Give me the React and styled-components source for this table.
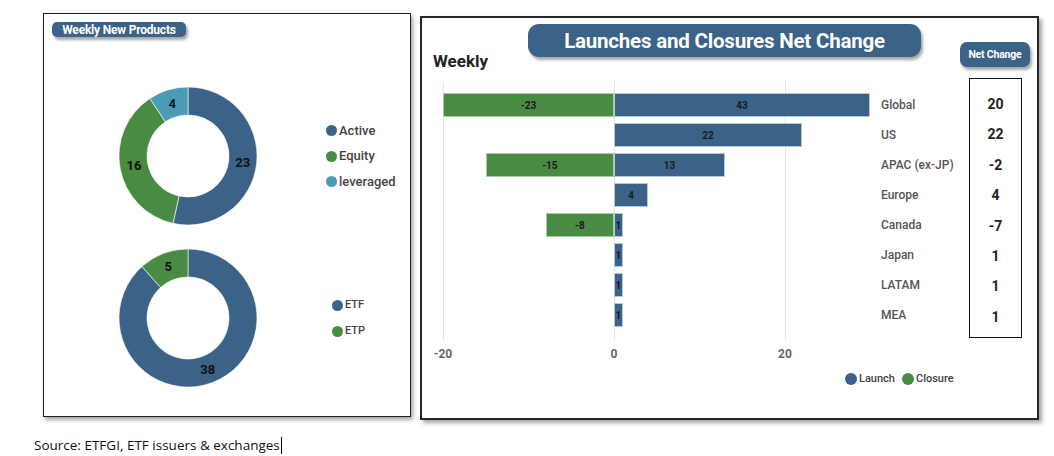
import React from "react";
import styled, { createGlobalStyle } from "styled-components";

const BLUE = "#3b6287";
const GREEN = "#4a8b43";
const TEAL = "#4a9bb6";
const PX = 171 / 20;

const mix = [
  { name: "Active", value: 23, color: BLUE },
  { name: "Equity", value: 16, color: GREEN },
  { name: "leveraged", value: 4, color: TEAL },
];

const wrapper = [
  { name: "ETF", value: 38, color: BLUE },
  { name: "ETP", value: 5, color: GREEN },
];

const regions = [
  { name: "Global", launch: 43, closure: -23, net: 20 },
  { name: "US", launch: 22, closure: 0, net: 22 },
  { name: "APAC (ex-JP)", launch: 13, closure: -15, net: -2 },
  { name: "Europe", launch: 4, closure: 0, net: 4 },
  { name: "Canada", launch: 1, closure: -8, net: -7 },
  { name: "Japan", launch: 1, closure: 0, net: 1 },
  { name: "LATAM", launch: 1, closure: 0, net: 1 },
  { name: "MEA", launch: 1, closure: 0, net: 1 },
];

const GlobalStyle = createGlobalStyle`
  body {
    margin: 0;
    background: #fff;
    font-family: Roboto, "Liberation Sans", sans-serif;
  }
`;

const Page = styled.div`
  padding: 13px 0 0 34px;
  width: 1054px;
  box-sizing: border-box;
`;

const Panels = styled.div`
  display: flex;
  align-items: flex-start;
  gap: 9px;
  margin-left: 9px;
`;

const LeftPanel = styled.div`
  width: 368px;
  height: 404px;
  box-sizing: border-box;
  border: 1px solid #1e1e1e;
  box-shadow: 2px 3px 4px rgba(0, 0, 0, 0.35);
  padding: 8px;
`;

const Badge = styled.div`
  display: flex;
  flex: none;
  align-items: center;
  justify-content: center;
  background: ${BLUE};
  color: #fff;
  font-weight: 700;
  box-shadow: 2px 3px 3px rgba(0, 0, 0, 0.35);
  white-space: nowrap;
  height: ${(p) => p.$h}px;
  width: ${(p) => p.$w}px;
  font-size: ${(p) => p.$size}px;
  border-radius: ${(p) => p.$radius}px;
  margin: ${(p) => p.$margin || 0};
  letter-spacing: -0.2px;
`;

const DonutRow = styled.div`
  display: flex;
  align-items: center;
  gap: ${(p) => p.$gap}px;
  margin: ${(p) => p.$top}px 0 0 66px;
`;

const Legend = styled.div`
  display: flex;
  flex-direction: column;
  gap: ${(p) => p.$gap}px;
`;

const LegendItem = styled.div`
  display: flex;
  align-items: center;
  gap: 2px;
  color: #444;
  font-weight: 500;
  font-size: ${(p) => p.$size}px;
  line-height: 14px;
`;

const Dot = styled.span`
  width: ${(p) => p.$d}px;
  height: ${(p) => p.$d}px;
  border-radius: 50%;
  background: ${(p) => p.$color};
  flex: none;
`;

const RightPanel = styled.div`
  margin-top: 3px;
  width: 619px;
  height: 404px;
  box-sizing: border-box;
  border: 2px solid #262626;
  box-shadow: 3px 3px 4px rgba(0, 0, 0, 0.35);
`;

const Header = styled.div`
  display: flex;
  align-items: flex-start;
  height: 60px;
`;

const Weekly = styled.div`
  width: 95px;
  margin: 33px 0 0 11px;
  font-size: 17px;
  font-weight: 700;
  color: #222;
  line-height: 20px;
`;

const Body = styled.div`
  display: flex;
  align-items: flex-start;
`;

const Plot = styled.div`
  width: 427px;
  height: 258px;
  box-sizing: border-box;
  margin: 4px 0 0 21px;
  padding-top: 11px;
  display: flex;
  flex-direction: column;
  gap: 6px;
  background-image: linear-gradient(#e3e3e3, #e3e3e3),
    linear-gradient(#e3e3e3, #e3e3e3), linear-gradient(#e3e3e3, #e3e3e3);
  background-size: 1px 100%;
  background-position: 0 0, 171px 0, 342px 0;
  background-repeat: no-repeat;
`;

const BarRow = styled.div`
  display: grid;
  grid-template-columns: 171px 256px;
  height: 24px;
`;

const Half = styled.div`
  display: flex;
  justify-content: ${(p) => (p.$left ? "flex-end" : "flex-start")};
`;

const Bar = styled.div`
  height: 24px;
  box-sizing: border-box;
  background: ${(p) => p.$color};
  border: 1px solid ${(p) => p.$edge};
  display: flex;
  align-items: center;
  justify-content: center;
  font-size: 10px;
  font-weight: 700;
  color: #1a1a1a;
  overflow: hidden;
`;

const Labels = styled.div`
  width: 88px;
  margin-left: 11px;
  padding-top: 15px;
  display: flex;
  flex-direction: column;
  gap: 6px;
`;

const Region = styled.div`
  height: 24px;
  display: flex;
  align-items: center;
  font-size: 12px;
  font-weight: 500;
  color: #555;
  white-space: nowrap;
`;

const NetBox = styled.div`
  width: 53px;
  height: 260px;
  box-sizing: border-box;
  border: 1.5px solid #111;
  padding-top: 13px;
  display: flex;
  flex-direction: column;
  gap: 6.4px;
`;

const NetValue = styled.div`
  height: 24px;
  display: flex;
  align-items: center;
  justify-content: center;
  font-size: 14px;
  font-weight: 700;
  color: #222;
`;

const Axis = styled.div`
  display: flex;
  gap: 131px;
  margin: 7px 0 0 1px;
`;

const Tick = styled.div`
  width: 40px;
  text-align: center;
  font-size: 12px;
  font-weight: 700;
  color: #666;
  line-height: 14px;
`;

const ChartLegend = styled.div`
  display: flex;
  gap: 7px;
  margin: 11px 0 0 423px;
`;

const Source = styled.div`
  margin-top: 16px;
  font-family: "Open Sans", sans-serif;
  font-size: 13.5px;
  line-height: 18px;
  color: #111;
  display: flex;
  align-items: center;
`;

const Caret = styled.span`
  width: 1px;
  height: 17px;
  background: #000;
  margin-left: 1px;
`;

function arcPath(cx, cy, R, r, a0, a1) {
  const rad = (a) => (a * Math.PI) / 180;
  const pt = (rr, a) => [cx + rr * Math.sin(rad(a)), cy - rr * Math.cos(rad(a))];
  const large = a1 - a0 > 180 ? 1 : 0;
  const [x0, y0] = pt(R, a0);
  const [x1, y1] = pt(R, a1);
  const [x2, y2] = pt(r, a1);
  const [x3, y3] = pt(r, a0);
  return `M${x0} ${y0} A${R} ${R} 0 ${large} 1 ${x1} ${y1} L${x2} ${y2} A${r} ${r} 0 ${large} 0 ${x3} ${y3} Z`;
}

function Donut({ data }) {
  const total = data.reduce((s, d) => s + d.value, 0);
  let start = 0;
  const parts = data.map((d) => {
    const end = start + (d.value / total) * 360;
    const mid = ((start + end) / 2) * (Math.PI / 180);
    const part = {
      ...d,
      path: arcPath(70, 70, 69, 41, start, end),
      lx: 70 + 55 * Math.sin(mid),
      ly: 70 - 55 * Math.cos(mid),
    };
    start = end;
    return part;
  });
  return (
    <svg width="140" height="140" viewBox="0 0 140 140">
      {parts.map((p) => (
        <path key={p.name} d={p.path} fill={p.color} stroke="#fff" strokeWidth="0.6" />
      ))}
      {parts.map((p) => (
        <text
          key={p.name + "l"}
          x={p.lx}
          y={p.ly}
          textAnchor="middle"
          dominantBaseline="central"
          fontSize="13"
          fontWeight="700"
          fill="#111"
          fontFamily="Roboto, sans-serif"
        >
          {p.value}
        </text>
      ))}
    </svg>
  );
}

export default function App() {
  return (
    <Page>
      <GlobalStyle />
      <Panels>
        <LeftPanel>
          <Badge $w={134} $h={15} $size={12} $radius={5}>
            Weekly New Products
          </Badge>
          <DonutRow $top={49} $gap={68}>
            <Donut data={mix} />
            <Legend $gap={11.5}>
              {mix.map((d) => (
                <LegendItem key={d.name} $size={13}>
                  <Dot $d={11} $color={d.color} />
                  {d.name}
                </LegendItem>
              ))}
            </Legend>
          </DonutRow>
          <DonutRow $top={22} $gap={74}>
            <Donut data={wrapper} />
            <Legend $gap={12}>
              {wrapper.map((d) => (
                <LegendItem key={d.name} $size={11}>
                  <Dot $d={11} $color={d.color} />
                  {d.name}
                </LegendItem>
              ))}
            </Legend>
          </DonutRow>
        </LeftPanel>

        <RightPanel>
          <Header>
            <Weekly>Weekly</Weekly>
            <Badge $w={393} $h={33} $size={20.5} $radius={11} $margin="6px 0 0 0">
              Launches and Closures Net Change
            </Badge>
            <Badge $w={70} $h={25} $size={10.5} $radius={7} $margin="24px 0 0 39px">
              Net Change
            </Badge>
          </Header>
          <Body>
            <Plot>
              {regions.map((r) => (
                <BarRow key={r.name}>
                  <Half $left>
                    {r.closure !== 0 && (
                      <Bar
                        $color={GREEN}
                        $edge="#a9cda4"
                        style={{ width: Math.min(-r.closure * PX, 171) }}
                      >
                        {r.closure}
                      </Bar>
                    )}
                  </Half>
                  <Half>
                    <Bar
                      $color={BLUE}
                      $edge="#b7c9da"
                      style={{ width: Math.min(r.launch * PX, 256) }}
                    >
                      {r.launch}
                    </Bar>
                  </Half>
                </BarRow>
              ))}
            </Plot>
            <Labels>
              {regions.map((r) => (
                <Region key={r.name}>{r.name}</Region>
              ))}
            </Labels>
            <NetBox>
              {regions.map((r) => (
                <NetValue key={r.name}>{r.net}</NetValue>
              ))}
            </NetBox>
          </Body>
          <Axis>
            <Tick>-20</Tick>
            <Tick>0</Tick>
            <Tick>20</Tick>
          </Axis>
          <ChartLegend>
            <LegendItem $size={11}>
              <Dot $d={12} $color={BLUE} />
              Launch
            </LegendItem>
            <LegendItem $size={11}>
              <Dot $d={12} $color={GREEN} />
              Closure
            </LegendItem>
          </ChartLegend>
        </RightPanel>
      </Panels>
      <Source>
        Source: ETFGI, ETF issuers &amp; exchanges
        <Caret />
      </Source>
    </Page>
  );
}
